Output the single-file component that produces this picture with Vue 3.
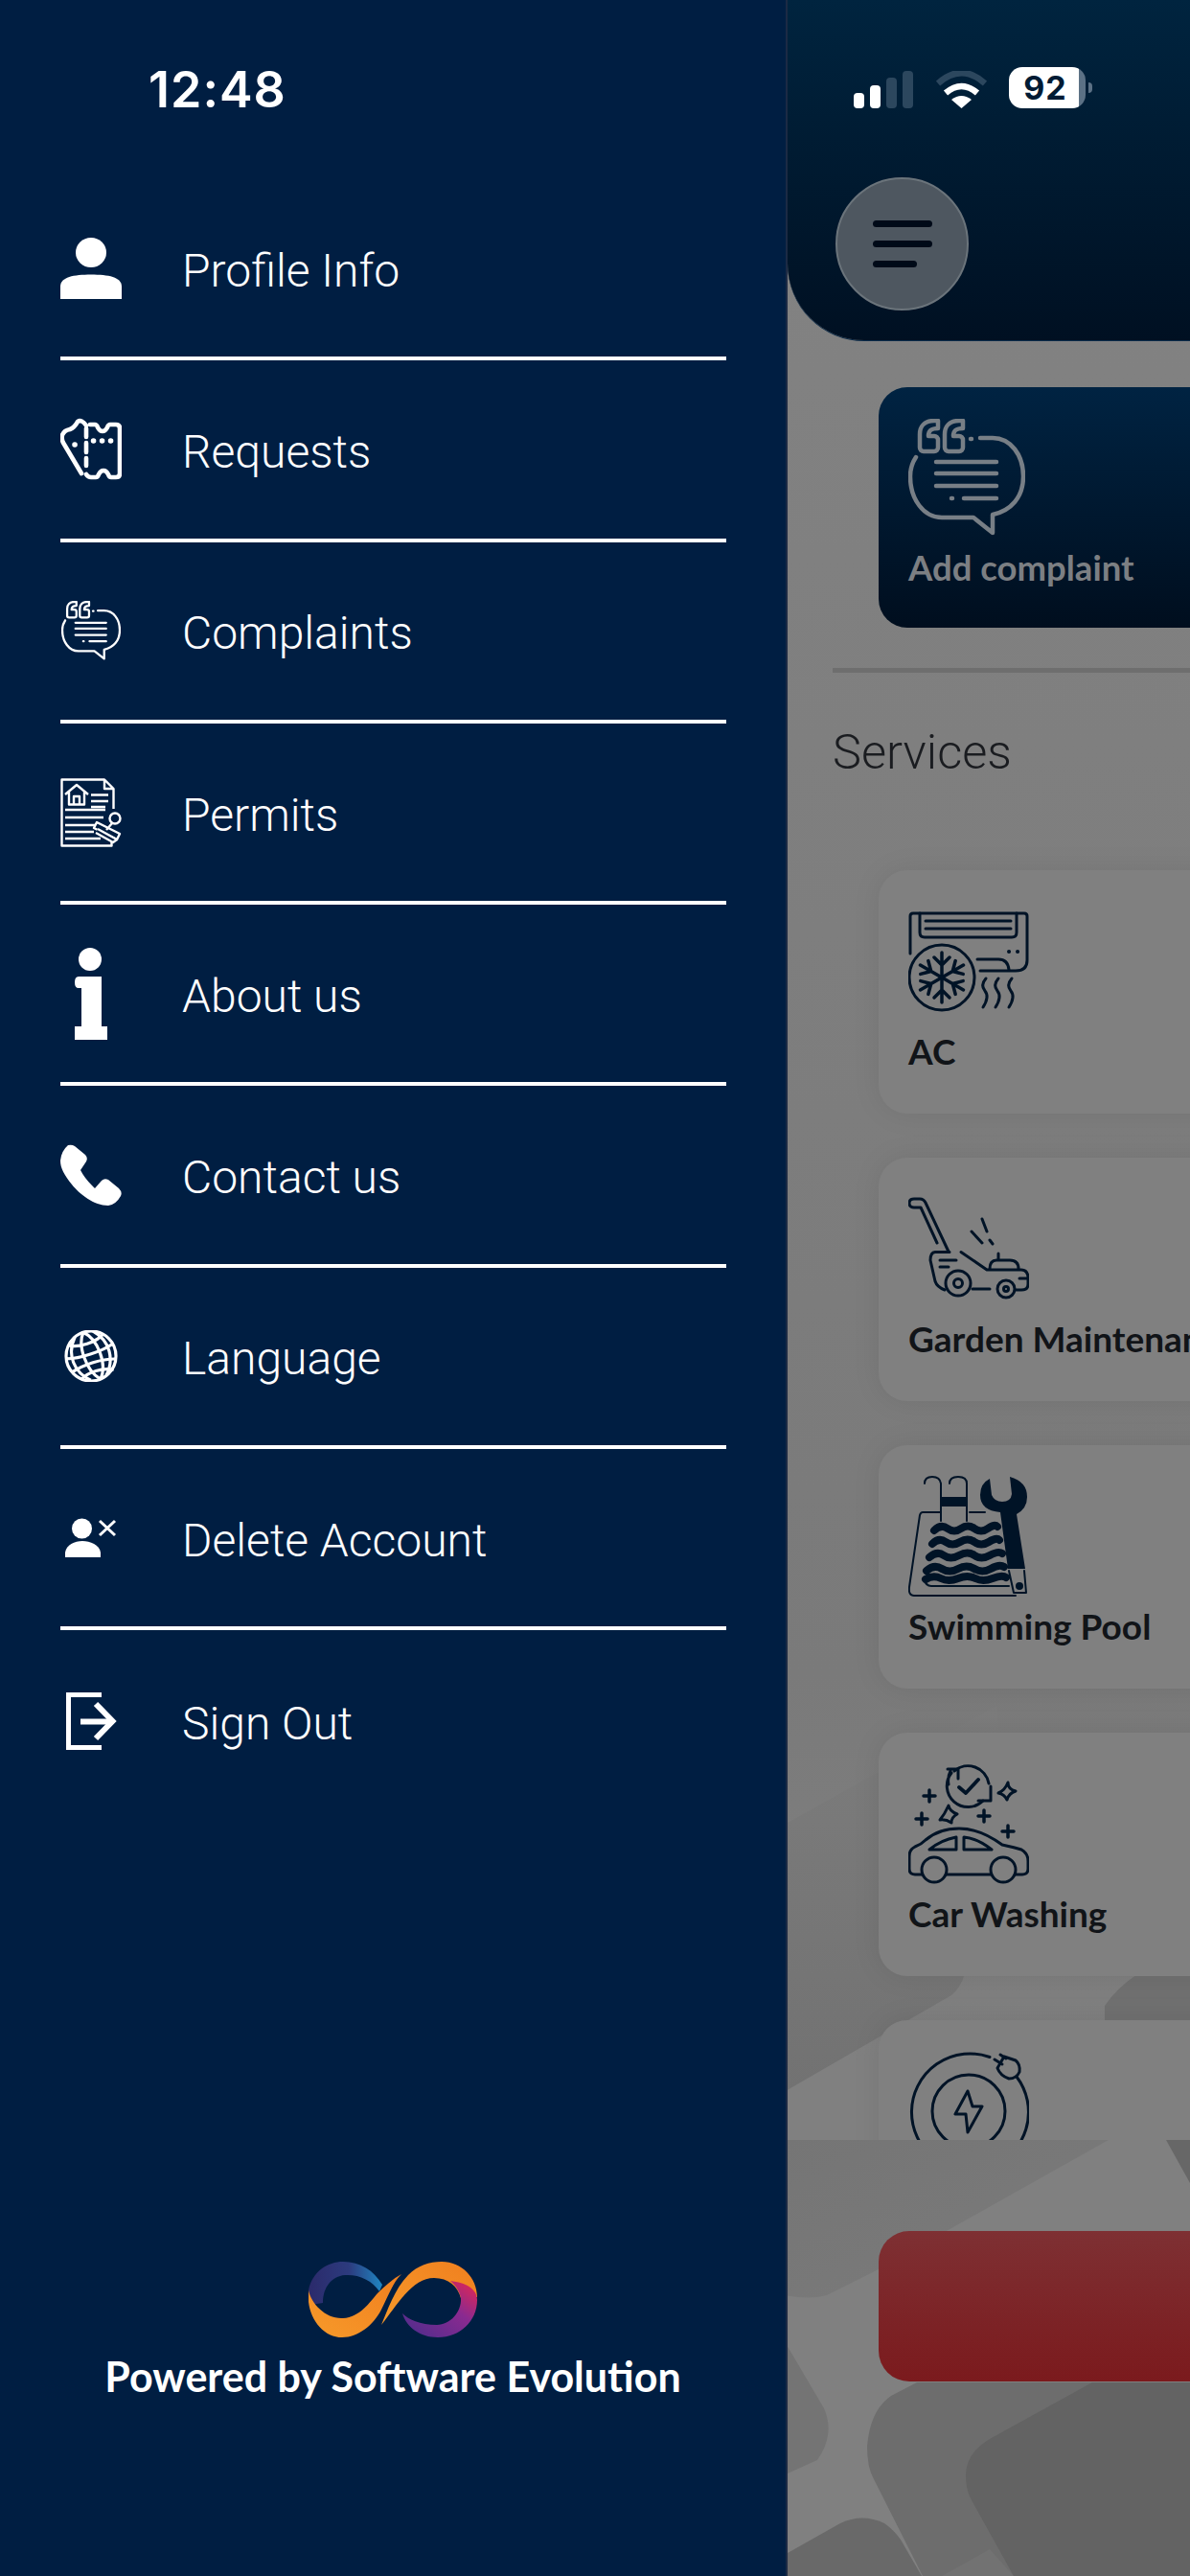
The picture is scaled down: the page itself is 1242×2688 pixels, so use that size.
<script setup>
const flakeArms = [0, 60, 120, 180, 240, 300]
</script>

<template>
  <div class="screen">
    <aside class="drawer">
      <div class="time">12:48</div>
      <nav class="menu">
        <div class="row">
          <span class="cell">
            <svg width="64" height="64" viewBox="0 0 64 64" fill="#fff"><ellipse cx="32" cy="15.5" rx="16" ry="15.5"/><path d="M0 64V51C0 41 14 38.5 32 38.5S64 41 64 51V64Z"/></svg>
          </span>
          <span class="label">Profile Info</span>
        </div>
        <div class="row">
          <span class="cell">
            <svg width="64" height="66" viewBox="0 0 64 66" fill="none" stroke="#fff" stroke-width="4.600" stroke-linecap="round" stroke-linejoin="round"><path d="M31 7h5q2 0 3 3q2 4 5 4t5-4q1-3 3-3h6q4 0 4 4v47q0 4-4 4h-5q-2 0-3-3q-2-4-5-4t-5 4q-1 3-3 3h-5q-3 0-5-3"/><path d="M27 8Q22 1 18 4Q15 10 10 12Q4 13 2 18Q1 22 3 26L22 58"/><path d="M27 11V20M27 26V36M27 42V50"/><path d="M34.500 24h.1M43.500 24h.1M52.500 24h.1M15 28h.1" stroke-width="5.500"/></svg>
          </span>
          <span class="label">Requests</span>
        </div>
        <div class="row">
          <span class="cell">
            <svg class="quote" width="62" height="62" viewBox="0 0 122 122"><path d="M31 2H27C17 2 12 8 12 16V30A4 4 0 0 0 16 34H27A4 4 0 0 0 31 30V22A4 4 0 0 0 27 18H21C21 12 24 10 31 10Z"/><path d="M57 2H53C43 2 38 8 38 16V30A4 4 0 0 0 42 34H53A4 4 0 0 0 57 30V22A4 4 0 0 0 53 18H47C47 12 50 10 57 10Z"/><path d="M75 20H88C107 20 120 38 120 60S107 96 88 100V119L68 103H35C16 103 2 84 2 60C2 52 4 46 8 40"/><path d="M65 21h1M29 45H92M29 57H92M29 70H92M45 83h1M58 83H92"/></svg>
          </span>
          <span class="label">Complaints</span>
        </div>
        <div class="row">
          <span class="cell">
            <svg width="64" height="72" viewBox="0 0 64 72" fill="none" stroke="#fff" stroke-width="2.400" stroke-linejoin="round"><path d="M46 1.500H1.500V70.500H53.500V64M55.500 32V11L46 1.500V11H55.500"/><path d="M5 17L17 7L29 17M9 14V27.500H25V14M14 27.500V19H20V27.500"/><path d="M32 17.500H50M32 24H50M32 30H47M5 33H47M5 41H45M5 49H38M5 56H35M5 63H42" stroke-width="2.400"/><circle cx="57" cy="42" r="5.500"/><path d="M54 47L48 54M35 52L59 64L62 58L38 46Z" fill="#001e42"/><path d="M37 57L55 67L59 64L39 53" fill="#001e42"/></svg>
          </span>
          <span class="label">Permits</span>
        </div>
        <div class="row">
          <span class="cell">
            <svg width="34" height="96" viewBox="0 0 34 96" fill="#fff"><circle cx="16" cy="12" r="12"/><path d="M4 30H28V82H34V96H0V82H7V42H4Q0 42 0 36T4 30Z"/></svg>
          </span>
          <span class="label">About us</span>
        </div>
        <div class="row">
          <span class="cell">
            <svg width="64" height="64" viewBox="0 0 64 64" fill="#fff"><path d="M8 1Q12 0 15 2L26 11Q29 14 27 18L21 27Q25 35 33 43L36 46L43 38Q46 35 50 37L61 46Q65 50 63 54Q58 63 50 64C35 64 20 52 12 42C4 32 0 25 0 17Q1 7 8 1Z"/></svg>
          </span>
          <span class="label">Contact us</span>
        </div>
        <div class="row">
          <span class="cell">
            <svg width="56" height="54" viewBox="0 0 56 54" fill="none" stroke="#fff" stroke-width="3.200"><circle cx="28" cy="27" r="26"/><g transform="rotate(-18 28 27)"><path d="M9 9C17 15 39 15 47 9M3 22C16 26 40 26 53 22M4 37C18 33 38 33 52 38M11 47C20 42 36 42 46 48"/><path d="M28 1C18 12 18 40 30 53M28 1C40 12 42 40 30 53M18 3C4 18 6 38 20 51M38 3C52 18 50 38 37 51"/></g></svg>
          </span>
          <span class="label">Language</span>
        </div>
        <div class="row">
          <span class="cell">
            <svg width="54" height="41" viewBox="0 0 54 41" fill="#fff"><circle cx="17.500" cy="11" r="10.500"/><path d="M0 41V36C1 28 10 24 18 24S36 28 37 36V41Z"/><path d="M36 3L52 18M52 3L36 18" stroke="#fff" stroke-width="3" fill="none"/></svg>
          </span>
          <span class="label">Delete Account</span>
        </div>
        <div class="row last">
          <span class="cell">
            <svg width="53" height="60" viewBox="0 0 53 60" fill="none" stroke="#fff" stroke-width="5"><path d="M37 2.500H2.500V57.500H37"/><path d="M15 30.500H48" stroke-width="6"/><path d="M31 12L48.500 30L31 48" stroke-width="6"/></svg>
          </span>
          <span class="label">Sign Out</span>
        </div>
      </nav>
      <footer class="credit">
        <svg width="176" height="79" viewBox="0 0 176 79">
          <defs>
            <linearGradient id="g-blue" x1="0" y1="0" x2="1" y2="0"><stop offset="0" stop-color="#2b2a6b"/><stop offset=".55" stop-color="#2c3b7e"/><stop offset="1" stop-color="#1f86c2"/></linearGradient>
            <linearGradient id="g-orange" x1="0" y1="1" x2="1" y2="0"><stop offset="0" stop-color="#f79a2a"/><stop offset="1" stop-color="#f07f1f"/></linearGradient>
            <linearGradient id="g-purple" x1="1" y1="0" x2="0" y2="1"><stop offset="0" stop-color="#e8264f"/><stop offset=".4" stop-color="#8a2a90"/><stop offset="1" stop-color="#4a2d8c"/></linearGradient>
          </defs>
          <path fill="url(#g-blue)" d="M0 30C4 10 20 0 36 0C54 0 68 9 77 24L74 31C66 19 52 13 38 14C24 15 15 27 15 43L2 45Z"/>
          <path fill="url(#g-orange)" d="M0 30C3 44 18 60 36 59C54 58 64 42 72 33C80 25 88 18 97 13C88 22 84 34 76 50C68 66 52 79 35 79C14 79 -3 56 0 30Z"/>
          <path fill="url(#g-orange)" d="M76 66C82 52 90 28 104 14C114 4 126 0 139 0C160 0 176 17 176 37L159 38C156 26 146 17 131 17C108 17 92 46 76 66Z"/>
          <path fill="url(#g-purple)" d="M148 20C164 22 176 28 176 40C176 62 158 79 135 79C116 79 102 68 98 54C104 60 116 66 134 66C148 66 160 52 159 38C158 32 154 25 148 20Z"/>
        </svg>
        <div class="powered">Powered by Software Evolution</div>
      </footer>
    </aside>

    <main class="main">
      <svg class="pattern" width="420" height="2688" viewBox="822 0 420 2688">
        <defs>
          <linearGradient id="g-a" x1="0" y1="0" x2="0" y2="1"><stop offset="0" stop-color="#7c7c7c"/><stop offset="1" stop-color="#727272"/></linearGradient>
          <linearGradient id="g-b" x1="0" y1="0" x2="1" y2="1"><stop offset="0" stop-color="#757575"/><stop offset="1" stop-color="#7b7b7b"/></linearGradient>
        </defs>
        <path fill="url(#g-a)" d="M820 1903L1040 1780L1060 1980Q1020 2040 1007 2060Q1002 2075 993 2082L820 2182Z"/>
        <path fill="url(#g-b)" d="M820 2233H1157L913 2370L863 2395Q845 2400 820 2395Z"/>
        <path fill="#707070" d="M1153 2093Q1165 2075 1187 2060L1242 2040V2110H1153Z"/>
        <path fill="#676767" d="M1217 2233H1242V2278Z"/>
        <path fill="#747474" d="M820 2445L860 2513Q872 2540 853 2567L820 2582Z"/>
        <path fill="#6d6d6d" d="M957 2486L930 2500Q908 2515 905 2553Q905 2575 912 2587L963 2688H1242V2486Z"/>
        <path fill="#727272" d="M983 2688L1033 2660L1058 2688Z"/>
        <path fill="#636363" d="M1140 2486L1033 2545Q1008 2560 1008 2583Q1008 2597 1013 2607L1058 2688H1242V2486Z"/>
        <path fill="#696969" d="M820 2665L877 2633Q900 2622 923 2633Q933 2640 940 2650L962 2688H820Z"/>
      </svg>
      <header class="topbar">
        <div class="status">
          <div class="signal">
            <i class="bar b1 on"></i><i class="bar b2 on"></i><i class="bar b3"></i><i class="bar b4"></i>
          </div>
          <svg class="wifi" width="53" height="39" viewBox="0 0 53 39">
            <path d="M2 13Q26.500 -9 51 13" fill="none" stroke="#2c475e" stroke-width="6.500"/>
            <path d="M10 23Q26.500 9 43 23" fill="none" stroke="#fff" stroke-width="6.500"/>
            <path d="M16 30Q26.500 22 37 30L26.500 39Z" fill="#fff"/>
          </svg>
          <div class="battery"><span class="pct">92</span></div>
          <i class="nub"></i>
        </div>
        <button class="burger"><i></i><i></i><i class="short"></i></button>
      </header>
      <section class="add-card">
        <svg class="quote dim" width="122" height="122" viewBox="0 0 122 122"><path d="M31 2H27C17 2 12 8 12 16V30A4 4 0 0 0 16 34H27A4 4 0 0 0 31 30V22A4 4 0 0 0 27 18H21C21 12 24 10 31 10Z"/><path d="M57 2H53C43 2 38 8 38 16V30A4 4 0 0 0 42 34H53A4 4 0 0 0 57 30V22A4 4 0 0 0 53 18H47C47 12 50 10 57 10Z"/><path d="M75 20H88C107 20 120 38 120 60S107 96 88 100V119L68 103H35C16 103 2 84 2 60C2 52 4 46 8 40"/><path d="M65 21h1M29 45H92M29 57H92M29 70H92M45 83h1M58 83H92"/></svg>
        <div class="add-label">Add complaint</div>
      </section>
      <div class="rule"></div>
      <h2 class="heading">Services</h2>
      <div class="list">
        <article class="card">
          <svg class="glyph" width="126" height="126" viewBox="0 0 126 126">
            <path d="M2 55V16Q2 13 5 13H121Q124 13 124 16V62Q124 73 112 73H75"/>
            <path d="M12 13V33Q12 38 17 38H108Q113 38 113 33V13M18 21H107M18 29H107"/>
            <path d="M105 53h.1M114 53h.1" stroke-width="4"/>
            <circle cx="35" cy="80" r="34"/>
            <g v-for="a in flakeArms" :key="a" :transform="`rotate(${a} 35 80)`">
              <path d="M35 80V54M27 59L35 67L43 59" stroke-width="3.500"/>
            </g>
            <path d="M72 61H94Q104 61 105 72"/>
            <path d="M81 81Q75 88 80 94T78 111M94 81Q88 88 93 94T91 111M108 81Q102 88 107 94T105 111"/>
          </svg>
          <div class="name">AC</div>
        </article>
        <article class="card">
          <svg class="glyph" width="126" height="126" viewBox="0 0 126 126">
            <path d="M30 57L13 20H6Q1 20 1 15.500T6 11H12Q16 11 18 15L42 66"/>
            <path d="M43 66.500H28Q23 67 23 75L28 97Q30 103 38 106M55 66.500L82 85H118Q125 85 125 94V100Q125 106 118 106H112M124 94H116"/>
            <circle cx="52" cy="99" r="13"/><circle cx="52" cy="99" r="4.500"/>
            <circle cx="102" cy="105" r="9"/><circle cx="102" cy="105" r="2.500"/>
            <path d="M67 105H85M85 84Q85 75 92 75H106Q115 75 115 84M94 75V68M33 75H50M33 82H42"/>
            <path d="M77 32L82 45M66 45L77 57M85 54L88 58"/>
          </svg>
          <div class="name">Garden Maintenance</div>
        </article>
        <article class="card">
          <svg class="glyph" width="126" height="126" viewBox="0 0 126 126">
            <g stroke-width="2">
              <path d="M17 8Q17 1 25 1T34 8V47M43 8Q43 1 52 1T61 8V47"/>
              <path d="M34 38H15Q13 38 12 41L1 116Q0 125 6 125H112M64 38H80M17 108Q18 115 24 115H105"/>
              <path d="M105 99L110 122H123L121 99" />
            </g>
            <rect x="34" y="22" width="27" height="10" fill="#001326" stroke="none"/>
            <path class="waves" d="M27 57Q34 50 41 55T55 55T69 55T83 55T93 53M25 71Q32 64 39 69T54 69T69 69T84 69T95 67M22 85Q30 78 37 83T53 83T69 83T85 83T98 81M19 99Q27 92 35 97T52 97T69 97T86 97T100 95M18 108Q26 103 34 107T52 107T70 107T88 107T102 106"/>
            <path fill="#001326" stroke="none" d="M85 3L87 20Q90 27 98 27Q107 27 108 19L106 1Q124 6 124 22Q124 34 113 40L122 97H104L96 38Q75 36 75 20Q75 8 85 3Z"/>
            <circle cx="116" cy="115" r="4" fill="#001326" stroke="none"/>
          </svg>
          <div class="name">Swimming Pool</div>
        </article>
        <article class="card">
          <svg class="glyph" width="126" height="126" viewBox="0 0 126 126">
            <path d="M48 8A22 22 0 0 1 84 21M78 39A22 22 0 0 1 45 10M42 22A22 22 0 0 1 44 8"/>
            <path d="M41 6H52V16M86 24V39H73"/>
            <path d="M53 25L60 31L73 17" stroke-width="3.800"/>
            <path d="M104 20Q104 27 112 29Q105 31 103 38Q100 32 94 31Q101 28 104 20ZM42 44Q43 50 51 53Q45 56 45 62Q39 58 33 59Q38 53 42 44Z" stroke-width="3"/>
            <path d="M22 28V40M16 34H28M14 52V64M8 58H20M79 49V61M73 55H85M104 65V77M98 71H110" stroke-width="3.500"/>
            <path d="M14 116H7Q1 116 1 110V97Q1 90 7 87Q13 85 18 80Q32 68 53 68Q75 68 98 85Q112 88 118 90Q125 94 125 102V110Q125 116 119 116H112M40 116H86"/>
            <circle cx="27" cy="111" r="13"/><circle cx="99" cy="111" r="13"/>
            <path d="M22 90Q34 80 50 77V90ZM58 77Q72 78 87 90H58Z" stroke-width="3"/>
          </svg>
          <div class="name">Car Washing</div>
        </article>
        <article class="card">
          <svg class="glyph" width="126" height="126" viewBox="0 0 126 126">
            <path d="M85 6.500A61 61 0 1 0 113 27"/>
            <circle cx="63" cy="63" r="38"/>
            <path d="M62 42L49 66H60L62 85L77 58H67Z"/>
            <path d="M100 6L93 18Q96 26 105 29Q113 29 116 22Q117 14 112 10Z"/>
            <path d="M98 14L90 9M102 8L96 4"/>
          </svg>
        </article>
      </div>
      <div class="cta"></div>
    </main>
  </div>
</template>

<style scoped>
.screen {
  display: flex;
  width: 1242px;
  height: 2688px;
  overflow: hidden;
  font-family: "Lato", "Noto Sans", sans-serif;
}
.drawer {
  flex: 0 0 822px;
  display: flex;
  flex-direction: column;
  background: #001e42;
  color: #fff;
  box-sizing: border-box;
  padding-left: 63px;
  border-right: 2px solid #1c2a44;
}
.time {
  height: 187px;
  box-sizing: border-box;
  padding: 64px 0 0 92px;
  font-family: "Inter", sans-serif;
  font-weight: 600;
  font-size: 52px;
  line-height: 60px;
  letter-spacing: 1px;
}
.menu {
  width: 695px;
  display: flex;
  flex-direction: column;
}
.row {
  height: 189.3px;
  box-sizing: border-box;
  display: flex;
  align-items: center;
  border-bottom: 4px solid #fff;
}
.row.last {
  border-bottom: 0;
}
.cell {
  flex: 0 0 64px;
  display: flex;
  justify-content: center;
  align-items: center;
  margin-right: 63px;
}
.cell svg {
  display: block;
  flex: none;
}
.label {
  font-family: "Roboto", "Lato", sans-serif;
  font-weight: 300;
  font-size: 48px;
  line-height: 60px;
  padding-top: 6px;
}
.quote {
  fill: none;
  stroke: #fff;
  stroke-width: 4.5;
  stroke-linecap: round;
  stroke-linejoin: round;
}
.quote.dim {
  stroke: #787f86;
  display: block;
}
.credit {
  margin-top: auto;
  margin-left: -63px;
  padding-bottom: 182px;
  display: flex;
  flex-direction: column;
  align-items: center;
  gap: 15px;
}
.powered {
  font-weight: 700;
  font-size: 43px;
  line-height: 52px;
}
.main {
  position: relative;
  flex: 1;
  min-width: 0;
  overflow: hidden;
  background: linear-gradient(#838383, #7a7a7a 65%, #808080 80%);
}
.pattern {
  position: absolute;
  left: 0;
  top: 0;
}
.topbar {
  position: relative;
  width: 900px;
  height: 355px;
  box-sizing: border-box;
  padding: 70px 0 0 50px;
  background: linear-gradient(#00243f, #001022);
  border-bottom-left-radius: 80px;
  box-shadow: 0 1px 0 #0b2b4a;
}
.status {
  height: 43px;
  margin-left: 19px;
  display: flex;
  align-items: center;
}
.signal {
  display: flex;
  align-items: flex-end;
  gap: 6px;
  height: 39px;
  margin-top: 3px;
}
.bar {
  display: block;
  width: 11px;
  border-radius: 4px;
  background: #2c475e;
}
.bar.on { background: #fff; }
.b1 { height: 16px; }
.b2 { height: 24px; }
.b3 { height: 32px; }
.b4 { height: 39px; }
.wifi {
  display: block;
  margin: 3px 0 0 24px;
}
.battery {
  width: 80px;
  height: 43px;
  margin-left: 23px;
  box-sizing: border-box;
  border-radius: 14px;
  background: linear-gradient(90deg, #fff 91%, #5c7185 91%);
  display: flex;
  justify-content: center;
  align-items: center;
  padding-right: 4px;
}
.pct {
  font-family: "Inter", sans-serif;
  font-weight: 700;
  font-size: 34px;
  line-height: 43px;
  color: #001b34;
  letter-spacing: 1px;
}
.nub {
  display: block;
  width: 4px;
  height: 11px;
  margin-left: 3px;
  border-radius: 0 6px 6px 0;
  background: #5c7185;
}
.burger {
  display: flex;
  flex-direction: column;
  align-items: flex-start;
  justify-content: center;
  gap: 14px;
  width: 139px;
  height: 139px;
  margin-top: 72px;
  padding: 0 0 0 37px;
  box-sizing: border-box;
  border: 2px solid #6b747b;
  border-radius: 50%;
  background: #4e5760;
}
.burger i {
  display: block;
  width: 62px;
  height: 7px;
  border-radius: 4px;
  background: #000a18;
}
.burger i.short { width: 46px; }
.add-card {
  position: relative;
  width: 800px;
  height: 251px;
  margin: 49px 0 0 95px;
  box-sizing: border-box;
  padding: 33px 0 0 31px;
  border-radius: 30px;
  background: linear-gradient(#002342, #000e1e);
}
.add-label {
  margin-top: 11px;
  font-weight: 700;
  font-size: 36.5px;
  line-height: 44px;
  color: #7c7f83;
}
.rule {
  position: relative;
  width: 800px;
  height: 5px;
  margin: 42px 0 0 47px;
  background: #6e6e6e;
}
.heading {
  position: relative;
  margin: 0 0 0 47px;
  padding-top: 53px;
  font-family: "Roboto", "Lato", sans-serif;
  font-weight: 300;
  font-size: 50.5px;
  line-height: 60px;
  color: #1a1c20;
}
.list {
  position: relative;
  height: 1418px;
  box-sizing: border-box;
  padding: 93px 0 0 95px;
  overflow: hidden;
  display: flex;
  flex-direction: column;
  gap: 46px;
}
.card {
  flex: none;
  width: 800px;
  height: 254px;
  box-sizing: border-box;
  padding: 32px 0 0 31px;
  border-radius: 30px;
  background: #808080;
  box-shadow: 0 0 30px rgba(0, 0, 0, 0.08);
}
.glyph {
  display: block;
  fill: none;
  stroke: #001326;
  stroke-width: 3;
  stroke-linecap: round;
  stroke-linejoin: round;
}
.waves {
  stroke-width: 8;
}
.name {
  margin-top: 9px;
  font-weight: 700;
  font-size: 37px;
  line-height: 44px;
  white-space: nowrap;
  color: #111418;
}
.cta {
  position: relative;
  width: 800px;
  height: 157px;
  margin: 95px 0 0 95px;
  border-radius: 32px;
  background: linear-gradient(#7e3033, #7b1a1d);
}
</style>
